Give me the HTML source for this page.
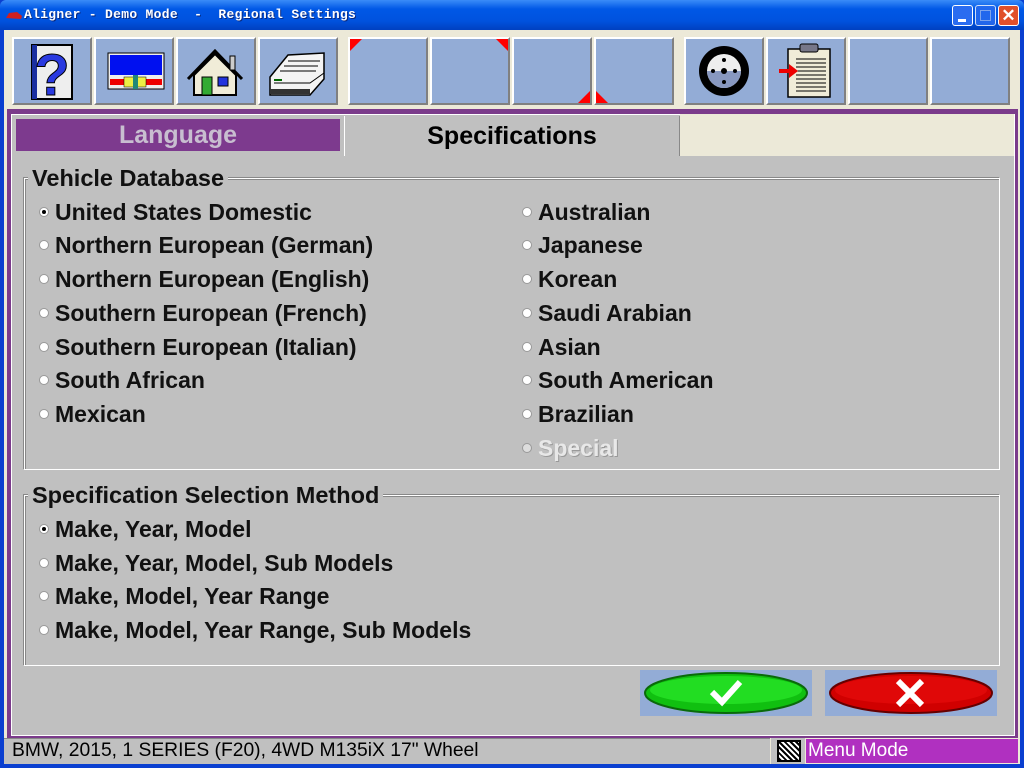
<!DOCTYPE html>
<html><head><style>
*{margin:0;padding:0;box-sizing:border-box}
body{width:1024px;height:768px;overflow:hidden;background:#0a3fd0;font-family:"Liberation Sans",Arial,sans-serif;position:relative}
.abs{position:absolute}
#title{left:0;top:0;width:1024px;height:30px;background:linear-gradient(#3a8cf8,#0058e6 30%,#0052de 70%,#0040c0);border-radius:6px 6px 0 0}
#title span{position:absolute;left:24px;top:7px;color:#fff;font-family:"Liberation Mono",monospace;font-weight:bold;font-size:13px;letter-spacing:0.3px;text-shadow:1px 1px #0a2a80}
.tb{width:21px;height:21px;top:5px;border:1px solid #fff;border-radius:3px}
#frame{left:4px;top:30px;width:1016px;height:734px;background:#ece9d8}
.btn{top:37px;width:80px;height:68px;background:#93acd6;border:2px solid;border-color:#fff #808080 #808080 #fff}
#purple{left:7px;top:109px;width:1011px;height:629px;background:#7b3b8b}
#inner{left:11px;top:114px;width:1004px;height:622px;background:#c0c0c0;border:1px solid #fff}
.tab{top:116px;height:40px;font-weight:bold;font-size:25px;text-align:center;line-height:40px}
.grp{border:1px solid #fff;box-shadow:inset 1px 1px #888, -1px -1px #888}
.gt{background:#c0c0c0;font-size:23.5px;font-weight:bold;padding:0 4px;color:#111}
.r{font-size:23px;font-weight:bold;color:#111;white-space:nowrap}
.r i{position:absolute;left:-16px;top:8px;width:10px;height:10px;border-radius:50%;background:#fff;border:1px solid #999}
.r i.on::after{content:"";position:absolute;left:2px;top:2px;width:4px;height:4px;border-radius:50%;background:#000}
</style></head><body>
<div class="abs" id="title"><svg class="abs" style="left:5px;top:10px" width="18" height="10"><path d="M1 8 L4 3 L12 2 L17 6 L16 9 Z" fill="#d02020"/></svg><span>Aligner - Demo Mode &nbsp;- &nbsp;Regional Settings</span>
<div class="abs tb" style="left:952px;background:#2a6cf0"><div class="abs" style="left:5px;top:13px;width:8px;height:3px;background:#fff"></div></div>
<div class="abs tb" style="left:975px;background:#2a6cf0;opacity:.8"><div class="abs" style="left:4px;top:4px;width:11px;height:11px;border:1px solid #9bb8f0"></div></div>
<div class="abs tb" style="left:998px;background:#e0502a;color:#fff;font-weight:bold;text-align:center;line-height:19px;font-size:17px">✕</div>
</div>
<div class="abs" id="frame"></div>
<div class="abs btn" style="left:12px"><svg width="76" height="64"><rect x="18" y="6" width="40" height="54" fill="#eee" stroke="#000" stroke-width="2"/><rect x="18" y="6" width="5" height="54" fill="#1a2fa0"/><text x="38" y="56" font-size="58" font-weight="bold" fill="#2a3ae0" stroke="#000" stroke-width="1" text-anchor="middle" font-family="Liberation Sans">?</text></svg></div>
<div class="abs btn" style="left:94px"><svg width="76" height="64"><rect x="12" y="14" width="56" height="36" fill="#eee" stroke="#000"/><rect x="14" y="16" width="52" height="20" fill="#0010f0"/><rect x="14" y="40" width="52" height="6" fill="#e00"/><rect x="28" y="38" width="22" height="10" fill="#ee4" stroke="#000" stroke-width=".5"/><rect x="37" y="36" width="5" height="14" fill="#287"/></svg></div>
<div class="abs btn" style="left:176px"><svg width="76" height="64"><path d="M10 40 L37 12 L64 40" fill="none" stroke="#000" stroke-width="3"/><path d="M16 36 L37 15 L58 36 L58 56 L16 56 Z" fill="#f0ecd8" stroke="#000" stroke-width="2"/><rect x="52" y="17" width="5" height="14" fill="#ccc" stroke="#000"/><rect x="24" y="38" width="10" height="18" fill="#3a3" stroke="#000"/><rect x="40" y="38" width="10" height="9" fill="#23d" stroke="#000"/></svg></div>
<div class="abs btn" style="left:258px"><svg width="76" height="64"><path d="M10 38 L28 16 L64 14 L64 40 L50 56 L10 56 Z" fill="#f4f4f4" stroke="#000" stroke-width="1.5"/><path d="M14 44 L50 44 L64 34" fill="none" stroke="#000"/><path d="M20 32h36M24 27h34M28 22h32" stroke="#000"/><rect x="10" y="50" width="40" height="5" fill="#333"/><rect x="14" y="40" width="8" height="2" fill="#060"/></svg></div>
<div class="abs btn" style="left:348px"><svg class="abs" style="left:0;top:0" width="12" height="12"><path d="M0 0h12L0 12Z" fill="#f00"/></svg></div>
<div class="abs btn" style="left:430px"><svg class="abs" style="right:0;top:0" width="12" height="12"><path d="M0 0h12v12Z" fill="#f00"/></svg></div>
<div class="abs btn" style="left:512px"><svg class="abs" style="right:0;bottom:0" width="12" height="12"><path d="M12 0v12H0Z" fill="#f00"/></svg></div>
<div class="abs btn" style="left:594px"><svg class="abs" style="left:0;bottom:0" width="12" height="12"><path d="M0 0l12 12H0Z" fill="#f00"/></svg></div>
<div class="abs btn" style="left:684px"><svg width="76" height="64"><circle cx="38" cy="32" r="25" fill="#000"/><circle cx="38" cy="32" r="17" fill="#eee"/><path d="M21 32a17 17 0 0 0 34 0Z" fill="#8898c0"/><circle cx="38" cy="32" r="3" fill="#000"/><circle cx="38" cy="21" r="2" fill="#000"/><circle cx="38" cy="43" r="2" fill="#000"/><circle cx="27" cy="32" r="2" fill="#000"/><circle cx="49" cy="32" r="2" fill="#000"/></svg></div>
<div class="abs btn" style="left:766px"><svg width="76" height="64"><rect x="20" y="10" width="42" height="48" fill="#f0ecd8" stroke="#000" stroke-width="1.5"/><rect x="32" y="5" width="18" height="8" rx="2" fill="#778" stroke="#000"/><path d="M28 20h30M28 24h30M28 28h30M28 32h30M28 36h30M28 40h30M28 44h30M28 48h30M28 52h30" stroke="#000"/><path d="M11 30h10v-5l9 7-9 7v-5H11Z" fill="#e00"/></svg></div>
<div class="abs btn" style="left:848px"></div>
<div class="abs btn" style="left:930px"></div>
<div class="abs" id="purple"></div>
<div class="abs" id="inner"></div>
<div class="abs" style="left:680px;top:114px;width:334px;height:42px;background:#ece9d8"></div>
<div class="abs tab" style="left:16px;width:324px;top:119px;height:32px;line-height:32px;background:#7d3a8e;color:#c8bed0">Language</div>
<div class="abs tab" style="left:344px;width:336px;background:#c0c0c0;color:#000;border-left:1px solid #fff;border-right:1px solid #888">Specifications</div>
<div class="abs grp" style="left:24px;top:178px;width:976px;height:292px"></div>
<div class="abs gt" style="left:28px;top:165px">Vehicle Database</div>
<div class="abs r" style="left:55px;top:199px"><i class="on"></i>United States Domestic</div>
<div class="abs r" style="left:55px;top:232px"><i></i>Northern European (German)</div>
<div class="abs r" style="left:55px;top:266px"><i></i>Northern European (English)</div>
<div class="abs r" style="left:55px;top:300px"><i></i>Southern European (French)</div>
<div class="abs r" style="left:55px;top:334px"><i></i>Southern European (Italian)</div>
<div class="abs r" style="left:55px;top:367px"><i></i>South African</div>
<div class="abs r" style="left:55px;top:401px"><i></i>Mexican</div>
<div class="abs r" style="left:538px;top:199px"><i></i>Australian</div>
<div class="abs r" style="left:538px;top:232px"><i></i>Japanese</div>
<div class="abs r" style="left:538px;top:266px"><i></i>Korean</div>
<div class="abs r" style="left:538px;top:300px"><i></i>Saudi Arabian</div>
<div class="abs r" style="left:538px;top:334px"><i></i>Asian</div>
<div class="abs r" style="left:538px;top:367px"><i></i>South American</div>
<div class="abs r" style="left:538px;top:401px"><i></i>Brazilian</div>
<div class="abs r" style="left:538px;top:435px;color:#e8e8e8;text-shadow:1px 1px #999"><i style="background:#ddd"></i>Special</div>
<div class="abs grp" style="left:24px;top:495px;width:976px;height:171px"></div>
<div class="abs gt" style="left:28px;top:482px">Specification Selection Method</div>
<div class="abs r" style="left:55px;top:516px"><i class="on"></i>Make, Year, Model</div>
<div class="abs r" style="left:55px;top:550px"><i></i>Make, Year, Model, Sub Models</div>
<div class="abs r" style="left:55px;top:583px"><i></i>Make, Model, Year Range</div>
<div class="abs r" style="left:55px;top:617px"><i></i>Make, Model, Year Range, Sub Models</div>
<div class="abs" style="left:640px;top:670px;width:172px;height:46px;background:#93acd6"><svg width="172" height="46"><ellipse cx="86" cy="23" rx="81" ry="20" fill="#10c010" stroke="#0a6a0a" stroke-width="2"/><ellipse cx="86" cy="20" rx="76" ry="14" fill="#22dd22"/><path d="M72 22l10 10 18-20" fill="none" stroke="#fff" stroke-width="6"/></svg></div>
<div class="abs" style="left:825px;top:670px;width:172px;height:46px;background:#93acd6"><svg width="172" height="46"><ellipse cx="86" cy="23" rx="81" ry="20" fill="#d00000" stroke="#600" stroke-width="2"/><ellipse cx="86" cy="20" rx="76" ry="14" fill="#e00808"/><path d="M73 11l24 24M97 11l-24 24" stroke="#fff" stroke-width="6"/></svg></div>
<div class="abs" style="left:4px;top:738px;width:766px;height:26px;background:#c0c0c0;border-top:1px solid #888"></div>
<div class="abs" style="left:12px;top:740px;font-size:19.3px;color:#000">BMW, 2015, 1 SERIES (F20), 4WD M135iX 17" Wheel</div>
<div class="abs" style="left:771px;top:738px;width:34px;height:26px;background:#c0c0c0"><div class="abs" style="left:6px;top:2px;width:24px;height:22px;background:repeating-linear-gradient(45deg,#000 0 2px,#fff 2px 4px);border:2px solid #000"></div></div>
<div class="abs" style="left:806px;top:739px;width:212px;height:24px;background:#b030c0;color:#fff;font-size:19px;padding-left:2px;line-height:24px">Menu Mode</div>
</body></html>
